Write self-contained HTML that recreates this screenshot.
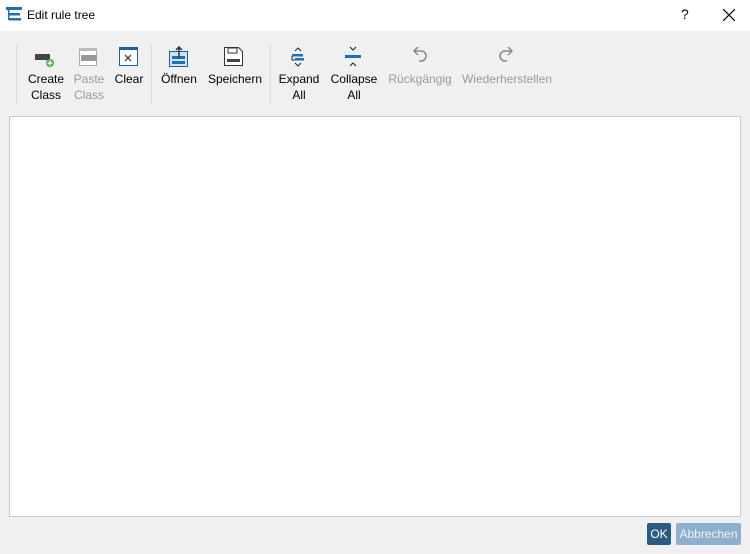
<!DOCTYPE html>
<html><head><style>
body{margin:0;width:750px;height:554px;background:#f0f0f0;font-family:"Liberation Sans",sans-serif;font-size:12px;position:relative;overflow:hidden}
.title{position:absolute;left:0;top:0;width:750px;height:31px;background:#fff}
.t{position:absolute;top:8px;left:27px;font-size:12px;color:#000}
.a{position:absolute;text-align:center;line-height:16px;color:#000}
.d{color:#9a9a9a}
.sep{position:absolute;top:44px;width:1px;height:60px;background:#dcdcdc}
.ic{position:absolute}
</style></head><body>
<div class="title">
<svg class="ic" style="left:6px;top:7px" width="17" height="15"><rect x="0" y="0" width="16" height="3" fill="#1d6fb8"/><rect x="2" y="3" width="1.5" height="10" fill="#1d6fb8"/><rect x="3" y="6" width="11" height="2.5" fill="#1d6fb8"/><rect x="3" y="11" width="12" height="2.5" fill="#1d6fb8"/></svg>
<div class="t">Edit rule tree</div>
<div style="position:absolute;left:681px;top:6px;font-size:14px">?</div>
<svg class="ic" style="left:723px;top:9px" width="12" height="12"><path d="M0 0L12 12M12 0L0 12" stroke="#000" stroke-width="1.2"/></svg>
</div>
<div class="sep" style="left:16px"></div><div class="sep" style="left:151px"></div><div class="sep" style="left:270px"></div>
<svg class="ic" style="left:35px;top:51px" width="20" height="16"><rect x="0" y="3" width="15" height="6" fill="#444"/><circle cx="15" cy="12" r="4" fill="#4caf50"/><path d="M15 9.5v5M12.5 12h5" stroke="#fff" stroke-width="1.3"/></svg>
<svg class="ic" style="left:79px;top:48px" width="20" height="20"><rect x="0.5" y="0.5" width="17" height="17" fill="#fff" stroke="#aaa"/><rect x="0" y="0" width="18" height="3" fill="#bbb"/><rect x="2" y="7" width="16" height="6" fill="#999"/></svg>
<svg class="ic" style="left:119px;top:47px" width="20" height="20"><rect x="0.5" y="0.5" width="18" height="18" fill="#fff" stroke="#1d5f9e"/><rect x="0" y="0" width="19" height="3" fill="#1d5f9e"/><path d="M6 8l6 6M12 8l-6 6" stroke="#333" stroke-width="1.2"/></svg>
<svg class="ic" style="left:169px;top:46px" width="20" height="22"><rect x="0.5" y="5.5" width="18" height="15" fill="#cfe3f5" stroke="#1d5f9e"/><rect x="3" y="10" width="13" height="3" fill="#1d6fb8"/><rect x="3" y="15" width="13" height="3" fill="#1d6fb8"/><path d="M10 12V1M7 4l3-3 3 3" stroke="#333" stroke-width="1.5" fill="none"/></svg>
<svg class="ic" style="left:224px;top:47px" width="20" height="20"><path d="M0.5 0.5h14l4 4v14h-18z" fill="#fff" stroke="#333"/><rect x="4" y="1" width="9" height="5" fill="none" stroke="#333"/><rect x="3" y="12" width="13" height="3" fill="#444"/></svg>
<svg class="ic" style="left:290px;top:47px" width="16" height="20"><path d="M5 4l3-3 3 3M5 16l3 3 3-3" stroke="#222" fill="none"/><rect x="2" y="7" width="11" height="2.5" fill="#1d6fb8"/><rect x="5" y="11" width="9" height="2.5" fill="#1d6fb8"/><path d="M2 9v4h3" stroke="#222" fill="none"/></svg>
<svg class="ic" style="left:344px;top:46px" width="18" height="22"><path d="M6 1l3 3 3-3M6 20l3-3 3 3" stroke="#222" fill="none"/><rect x="1" y="9" width="16" height="3" fill="#1d6fb8"/></svg>
<svg class="ic" style="left:410px;top:47px" width="20" height="20"><path d="M5 4h6a5 5 0 0 1 0 10h-2" stroke="#888" stroke-width="1.5" fill="none"/><path d="M8 0L4 4l4 4" stroke="#888" stroke-width="1.5" fill="none"/></svg>
<svg class="ic" style="left:497px;top:47px" width="20" height="20"><path d="M14 4h-6a5 5 0 0 0 0 10h2" stroke="#888" stroke-width="1.5" fill="none"/><path d="M11 0l4 4-4 4" stroke="#888" stroke-width="1.5" fill="none"/></svg>
<div class="a" style="left:24px;top:71px;width:44px">Create<br>Class</div>
<div class="a d" style="left:68px;top:71px;width:42px">Paste<br>Class</div>
<div class="a" style="left:110px;top:71px;width:38px">Clear</div>
<div class="a" style="left:156px;top:71px;width:46px">Öffnen</div>
<div class="a" style="left:206px;top:71px;width:58px">Speichern</div>
<div class="a" style="left:275px;top:71px;width:48px">Expand<br>All</div>
<div class="a" style="left:327px;top:71px;width:54px">Collapse<br>All</div>
<div class="a d" style="left:385px;top:71px;width:70px">Rückgängig</div>
<div class="a d" style="left:460px;top:71px;width:94px">Wiederherstellen</div>
<div style="position:absolute;left:9px;top:116px;width:730px;height:399px;background:#fff;border:1px solid #c8c8c8"></div>
<div style="position:absolute;left:647px;top:523px;width:24px;height:22px;background:#2a5c82;color:#fff;text-align:center;line-height:22px;border-radius:2px">OK</div>
<div style="position:absolute;left:676px;top:523px;width:65px;height:22px;background:#8fb0cc;color:#eef3f8;text-align:center;line-height:22px;border-radius:2px">Abbrechen</div>
</body></html>
